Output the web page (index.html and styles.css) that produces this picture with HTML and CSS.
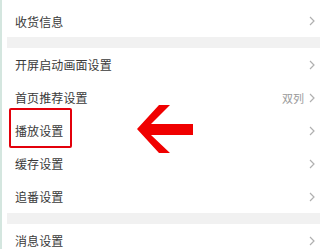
FILE: index.html
```html
<!DOCTYPE html>
<html>
<head>
<meta charset="utf-8">
<link rel="stylesheet" href="styles.css">
</head>
<body>
<div class="page">
  <div class="group">
    <div class="row first"><span class="label">收货信息</span><svg class="chev" width="6" height="10" viewBox="0 0 6 10"><polyline points="1,1 5,5 1,9" fill="none" stroke="#b0b0b0" stroke-width="1.2"/></svg></div>
  </div>
  <div class="band"></div>
  <div class="group">
    <div class="row"><span class="label">开屏启动画面设置</span><svg class="chev" width="6" height="10" viewBox="0 0 6 10"><polyline points="1,1 5,5 1,9" fill="none" stroke="#b0b0b0" stroke-width="1.2"/></svg></div>
    <div class="row"><span class="label">首页推荐设置</span><span class="value">双列</span><svg class="chev" width="6" height="10" viewBox="0 0 6 10"><polyline points="1,1 5,5 1,9" fill="none" stroke="#b0b0b0" stroke-width="1.2"/></svg></div>
    <div class="row"><span class="label">播放设置</span><svg class="chev" width="6" height="10" viewBox="0 0 6 10"><polyline points="1,1 5,5 1,9" fill="none" stroke="#b0b0b0" stroke-width="1.2"/></svg></div>
    <div class="row"><span class="label">缓存设置</span><svg class="chev" width="6" height="10" viewBox="0 0 6 10"><polyline points="1,1 5,5 1,9" fill="none" stroke="#b0b0b0" stroke-width="1.2"/></svg></div>
    <div class="row"><span class="label">追番设置</span><svg class="chev" width="6" height="10" viewBox="0 0 6 10"><polyline points="1,1 5,5 1,9" fill="none" stroke="#b0b0b0" stroke-width="1.2"/></svg></div>
  </div>
  <div class="band"></div>
  <div class="group">
    <div class="row"><span class="label">消息设置</span><svg class="chev" width="6" height="10" viewBox="0 0 6 10"><polyline points="1,1 5,5 1,9" fill="none" stroke="#b0b0b0" stroke-width="1.2"/></svg></div>
  </div>
  <div class="highlight"></div>
  <svg class="arrow" width="60" height="52" viewBox="135 103 60 52">
    <polygon points="137,129 159,105 170,105 151,124 193,124 193,135 151,135 170,153 159,153" fill="#f00000"/>
  </svg>
</div>
</body>
</html>
```

FILE: styles.css
```css
html, body {
  margin: 0;
  padding: 0;
  background: #fff;
}
body {
  width: 320px;
  height: 249px;
  overflow: hidden;
  font-family: "Noto Sans CJK SC", "Noto Sans", sans-serif;
}
.page {
  position: relative;
  width: 320px;
  height: 249px;
  overflow: hidden;
  border-left: 2px solid #d4e6df;
  box-sizing: border-box;
}
.group {
  background: #fff;
}
.row {
  display: flex;
  align-items: center;
  height: 33px;
  padding: 0 5px 0 13px;
  box-sizing: border-box;
}
.row.first {
  height: 37px;
  padding-top: 5px;
}
.label {
  flex: 1;
  font-size: 12px;
  color: #3a3a3a;
  letter-spacing: 0.1px;
}
.value {
  font-size: 11px;
  color: #9a9a9a;
  margin-right: 5px;
}
.chev {
  display: block;
}
.band {
  height: 11px;
  margin-left: 5px;
  background: #f1f1f1;
}
.highlight {
  position: absolute;
  left: 7px;
  top: 108px;
  width: 63px;
  height: 40px;
  border: 2px solid #e3000b;
  border-radius: 2px;
  box-sizing: border-box;
}
.arrow {
  position: absolute;
  left: 133px;
  top: 103px;
}
```
